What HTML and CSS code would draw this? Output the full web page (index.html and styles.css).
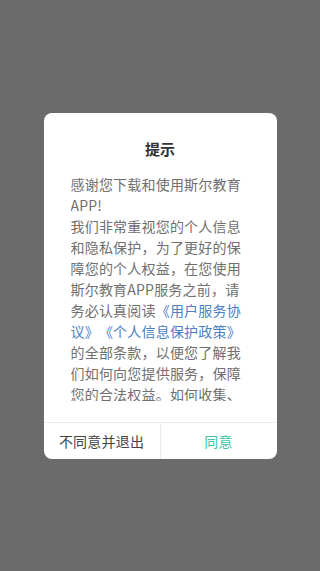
FILE: index.html
```html
<!DOCTYPE html>
<html lang="zh-CN">
<head>
    <meta charset="UTF-8">
    <meta name="viewport" content="width=device-width, initial-scale=1.0">
    <title>提示</title>
    <link rel="stylesheet" href="styles.css">
</head>
<body>
    <div class="mask">
        <div class="dialog">
            <div class="dialog-title">提示</div>
            <div class="dialog-body">
                <p>感谢您下载和使用斯尔教育APP!</p>
                <p>我们非常重视您的个人信息和隐私保护，为了更好的保障您的个人权益，在您使用斯尔教育APP服务之前，请务必认真阅读<a class="link">《用户服务协议》</a><a class="link">《个人信息保护政策》</a>的全部条款，以便您了解我们如何向您提供服务，保障您的合法权益。如何收集、使用、存储、共享您的相关个人信息，如何管理您的个人信息，以及您享有的相关权利。</p>
            </div>
            <div class="dialog-footer">
                <div class="btn btn-cancel">不同意并退出</div>
                <div class="btn btn-ok">同意</div>
            </div>
        </div>
    </div>
</body>
</html>
```

FILE: styles.css
```css
* {
    margin: 0;
    padding: 0;
    box-sizing: border-box;
}

body {
    font-family: "Noto Sans CJK SC", "Noto Sans", sans-serif;
    background: #6b6b6b;
    height: 100vh;
}

.mask {
    height: 100%;
    display: flex;
    align-items: center;
    justify-content: center;
}

.dialog {
    width: 233px;
    height: 346px;
    background: #fff;
    border-radius: 8px;
    display: flex;
    flex-direction: column;
    overflow: hidden;
}

.dialog-title {
    padding-top: 25px;
    text-align: center;
    font-size: 15px;
    line-height: 22px;
    font-weight: 700;
    color: #333;
}

.dialog-body {
    margin: 14px 0 0 27px;
    width: 174px;
    height: 227px;
    overflow: hidden;
    font-size: 14px;
    line-height: 21px;
    letter-spacing: 0.2px;
    color: #707070;
    text-spacing-trim: space-all;
}

.link {
    color: #4a80c4;
}

.dialog-footer {
    margin-top: auto;
    height: 37px;
    border-top: 1px solid #ececec;
    display: flex;
}

.btn {
    flex: 1;
    display: flex;
    align-items: center;
    justify-content: center;
    font-size: 14px;
    letter-spacing: 0.2px;
}

.btn-cancel {
    color: #444;
    border-right: 1px solid #ececec;
}

.btn-ok {
    color: #3cc6a6;
}
```
